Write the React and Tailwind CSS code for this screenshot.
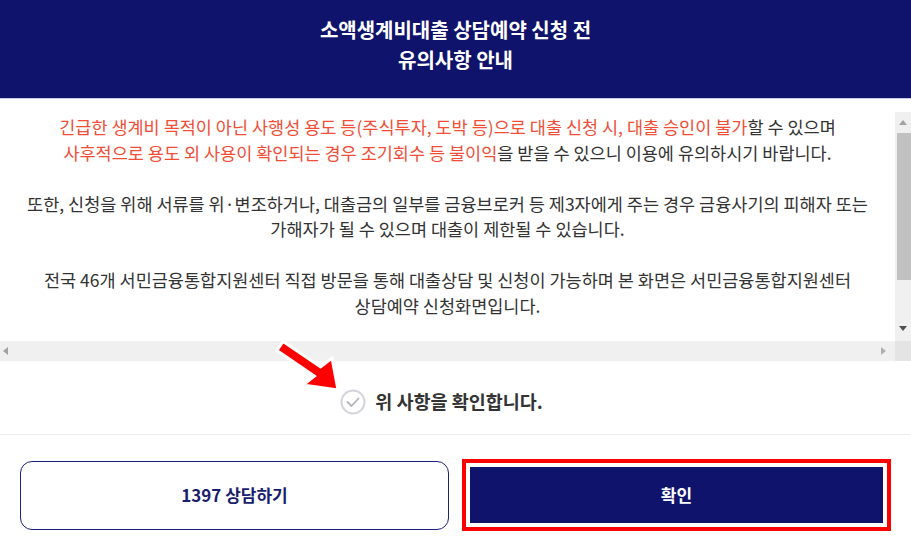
import React from 'react';

const font = { fontFamily: '"Noto Sans CJK KR", "Noto Sans", sans-serif' };

function VScrollbar() {
    return (
        <div className="w-[16px] flex flex-col bg-[#f0f0f0]">
            <div className="h-[21px] flex items-center justify-center">
                <div className="w-0 h-0 border-l-[4px] border-r-[4px] border-b-[5px] border-l-transparent border-r-transparent border-b-[#a3a3a3]" />
            </div>
            <div className="h-[147px] ml-[2px] bg-[#c1c1c1]" />
            <div className="flex-1 flex items-end justify-center pb-[10px]">
                <div className="w-0 h-0 border-l-[4px] border-r-[4px] border-t-[5px] border-l-transparent border-r-transparent border-t-[#505050]" />
            </div>
        </div>
    );
}

function HScrollbar() {
    return (
        <div className="h-[20px] flex">
            <div className="flex-1 flex items-center justify-between px-[3px] pr-[9px] bg-[#f0f0f0]">
                <div className="w-0 h-0 border-t-[4px] border-b-[4px] border-r-[5px] border-t-transparent border-b-transparent border-r-[#a3a3a3]" />
                <div className="w-0 h-0 border-t-[4px] border-b-[4px] border-l-[5px] border-t-transparent border-b-transparent border-l-[#b0b0b0]" />
            </div>
            <div className="w-[16px] bg-[#e4e4e4]" />
        </div>
    );
}

export default function App() {
    return (
        <div className="relative w-[911px] h-[543px] bg-white overflow-hidden" style={font}>
            {/* header */}
            <div className="h-[99px] bg-[#0f136b] border-b border-[#c9cae3] pt-[15px] text-center text-white font-bold text-[20px] leading-[30px]">
                소액생계비대출 상담예약 신청 전<br />유의사항 안내
            </div>

            {/* scroll box */}
            <div className="mt-[13px]">
                <div className="h-[229px] flex">
                    <div className="flex-1 pt-[2px] text-center text-[17.5px] leading-[25.5px] text-[#333] whitespace-nowrap">
                        <p>
                            <span className="text-[#f04e37]">긴급한 생계비 목적이 아닌 사행성 용도 등(주식투자, 도박 등)으로 대출 신청 시, 대출 승인이 불가</span>할 수 있으며
                            <br />
                            <span className="text-[#f04e37]">사후적으로 용도 외 사용이 확인되는 경우 조기회수 등 불이익</span>을 받을 수 있으니 이용에 유의하시기 바랍니다.
                        </p>
                        <p className="mt-[25.5px]">
                            또한, 신청을 위해 서류를 위·변조하거나, 대출금의 일부를 금융브로커 등 제3자에게 주는 경우 금융사기의 피해자 또는
                            <br />
                            가해자가 될 수 있으며 대출이 제한될 수 있습니다.
                        </p>
                        <p className="mt-[25.5px]">
                            전국 46개 서민금융통합지원센터 직접 방문을 통해 대출상담 및 신청이 가능하며 본 화면은 서민금융통합지원센터
                            <br />
                            상담예약 신청화면입니다.
                        </p>
                    </div>
                    <VScrollbar />
                </div>
                <HScrollbar />
            </div>

            {/* agree */}
            <div className="h-[74px] pt-[8px] pr-[28px] flex items-center justify-center gap-[9px] border-b border-[#ececec]">
                <svg width="26" height="26" viewBox="0 0 26 26">
                    <circle cx="13" cy="13" r="11.5" fill="white" stroke="#d3d3dc" strokeWidth="2" />
                    <polyline points="7.5,13 11.5,17 18.5,9.5" fill="none" stroke="#b4b4bd" strokeWidth="1.8" strokeLinecap="round" strokeLinejoin="round" />
                </svg>
                <span className="text-[18.5px] font-bold text-[#333]">위 사항을 확인합니다.</span>
            </div>

            {/* buttons */}
            <div className="px-[20px] pt-[24px] flex items-center gap-[13px]">
                <button className="w-[429px] h-[69px] rounded-[12px] border border-[#1d2077] bg-white text-[#1a1d6e] text-[17px] font-bold">
                    1397 상담하기
                </button>
                <div className="w-[429px] h-[72px] border-[4px] border-[#ff0000] bg-white p-[4px]">
                    <button className="w-full h-full bg-[#0f136b] text-white text-[17px] font-bold">
                        확인
                    </button>
                </div>
            </div>

            {/* annotation arrow */}
            <svg className="absolute left-[265px] top-[330px]" width="85" height="70" viewBox="0 0 85 70">
                <polygon
                    points="18.1,11.5 55.6,36.9 67,28 73,60 38,55 49.4,46 11.9,20.5"
                    fill="#ff0000"
                    stroke="white"
                    strokeWidth="3"
                    strokeLinejoin="miter"
                />
            </svg>
        </div>
    );
}
